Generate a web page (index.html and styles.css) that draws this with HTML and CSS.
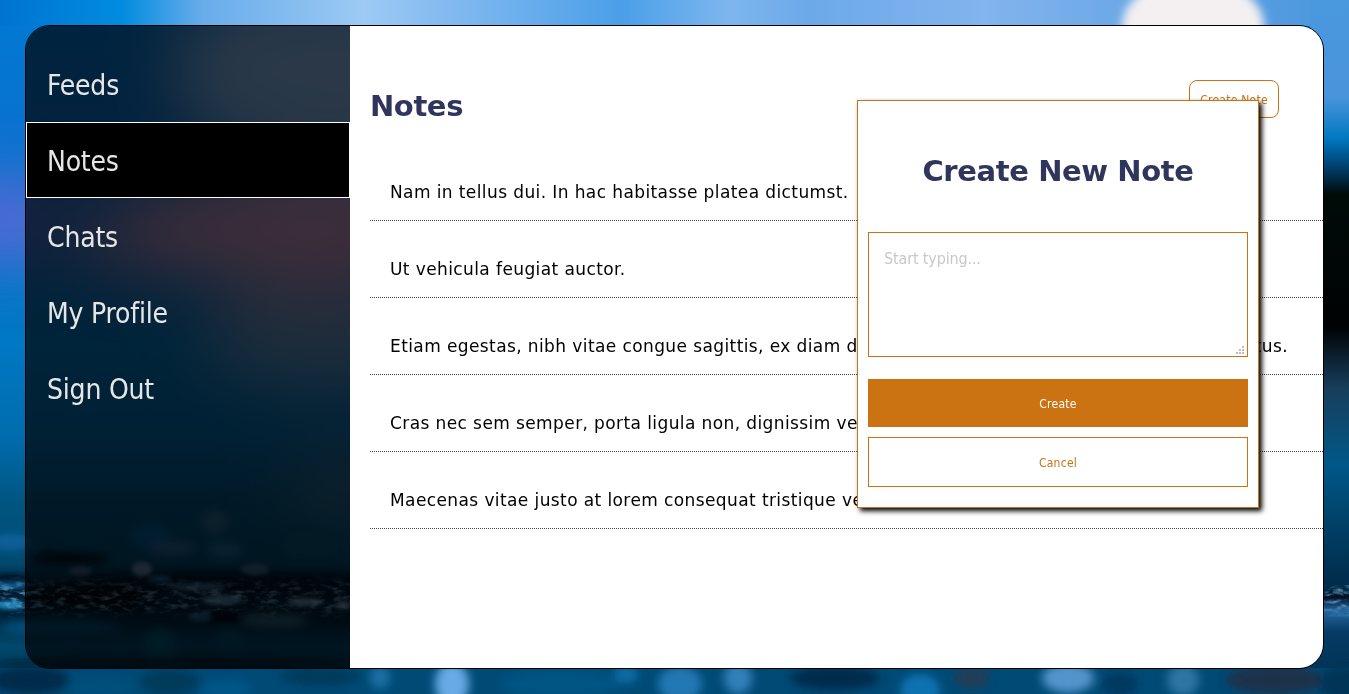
FILE: index.html
```html
<!DOCTYPE html>
<html lang="en">
<head>
<meta charset="utf-8">
<title>Notes</title>
<link rel="stylesheet" href="styles.css">
</head>
<body>
<svg class="backdrop" viewBox="0 0 1349 694" preserveAspectRatio="none" aria-hidden="true">
  <defs>
    <linearGradient id="sky" x1="0" y1="0" x2="0" y2="1">
      <stop offset="0" stop-color="#007ad4"/><stop offset=".18" stop-color="#0872d0"/>
      <stop offset=".5" stop-color="#0078c2"/><stop offset=".63" stop-color="#006cae"/>
      <stop offset=".72" stop-color="#005682"/><stop offset=".81" stop-color="#004a70"/>
      <stop offset=".85" stop-color="#001a30"/><stop offset=".89" stop-color="#00233c"/>
      <stop offset=".93" stop-color="#00486c"/><stop offset="1" stop-color="#003e66"/>
    </linearGradient>
    <linearGradient id="east" x1="0" y1="0" x2="0" y2="1">
      <stop offset="0" stop-color="#4a98dd"/><stop offset=".14" stop-color="#4a94dc"/>
      <stop offset=".2" stop-color="#0078c0"/><stop offset=".245" stop-color="#003a63"/>
      <stop offset=".28" stop-color="#000b08"/><stop offset=".47" stop-color="#000203"/>
      <stop offset=".56" stop-color="#183e5c"/><stop offset=".67" stop-color="#005888"/>
      <stop offset=".77" stop-color="#003d62"/><stop offset=".85" stop-color="#002a48"/>
      <stop offset=".86" stop-color="#001024"/><stop offset=".88" stop-color="#2468a0"/>
      <stop offset=".91" stop-color="#073b65"/><stop offset="1" stop-color="#00304f"/>
    </linearGradient>
    <linearGradient id="top" x1="0" y1="0" x2="1" y2="0">
      <stop offset="0" stop-color="#0074d0"/><stop offset=".09" stop-color="#008ce0"/>
      <stop offset=".15" stop-color="#68acea"/><stop offset=".27" stop-color="#9ccaf4"/>
      <stop offset=".33" stop-color="#84baf0"/><stop offset=".46" stop-color="#4a9fe8"/>
      <stop offset=".54" stop-color="#7db6ef"/><stop offset=".6" stop-color="#6ca9e9"/>
      <stop offset=".73" stop-color="#82b4ee"/><stop offset="1" stop-color="#4795dc"/>
    </linearGradient>
    <filter id="b30" x="-100%" y="-100%" width="300%" height="300%"><feGaussianBlur stdDeviation="34"/></filter>
    <filter id="b4" x="-50%" y="-50%" width="200%" height="200%"><feGaussianBlur stdDeviation="5"/></filter>
    <filter id="b2" x="-50%" y="-50%" width="200%" height="200%"><feGaussianBlur stdDeviation="2"/></filter>
    <filter id="speckle" x="0" y="0" width="100%" height="100%">
      <feTurbulence type="fractalNoise" baseFrequency=".09 .22" numOctaves="4" seed="4"/>
      <feColorMatrix values="0 0 0 0 .22  0 0 0 0 .5  0 0 0 0 .75  3.2 0 0 0 -1.5"/>
    </filter>
    <linearGradient id="band" x1="0" y1="0" x2="0" y2="1">
      <stop offset="0" stop-color="#000"/><stop offset=".35" stop-color="#fff"/>
      <stop offset=".75" stop-color="#fff"/><stop offset="1" stop-color="#000"/>
    </linearGradient>
    <mask id="fade"><rect y="575" width="1349" height="44" fill="url(#band)"/></mask>
  </defs>
  <rect width="1349" height="694" fill="url(#sky)"/>
  <g filter="url(#b30)">
    <ellipse cx="340" cy="70" rx="170" ry="95" fill="#8cbcf0"/>
    <ellipse cx="0" cy="220" rx="50" ry="38" fill="#7564d8"/>
    <ellipse cx="170" cy="235" rx="110" ry="38" fill="#8f80c0"/>
    <ellipse cx="300" cy="228" rx="180" ry="52" fill="#d898c0"/>
    <ellipse cx="330" cy="335" rx="130" ry="50" fill="#6c98c4"/>
    <ellipse cx="345" cy="485" rx="60" ry="30" fill="#407494"/>
  </g>
  <rect width="1349" height="26" fill="url(#top)"/>
  <rect x="1310" width="39" height="694" fill="url(#east)"/>
  <ellipse cx="1193" cy="27" rx="71" ry="50" fill="#f4f0f2" filter="url(#b4)"/>
  <g filter="url(#b4)">
    <ellipse cx="10" cy="542" rx="24" ry="8" fill="#0a609a"/>
    <ellipse cx="80" cy="540" rx="22" ry="9" fill="#004e7c"/>
    <ellipse cx="150" cy="536" rx="20" ry="12" fill="#006098"/>
    <ellipse cx="172" cy="548" rx="24" ry="7" fill="#2c6898"/>
    <ellipse cx="215" cy="522" rx="14" ry="12" fill="#2c6890"/>
    <ellipse cx="225" cy="550" rx="18" ry="8" fill="#28689a"/>
    <ellipse cx="310" cy="545" rx="30" ry="14" fill="#105478"/>
    <ellipse cx="70" cy="558" rx="40" ry="6" fill="#000812"/>
    <ellipse cx="220" cy="580" rx="150" ry="6" fill="#00101e"/>
    <ellipse cx="90" cy="597" rx="60" ry="12" fill="#000a14"/>
    <ellipse cx="240" cy="618" rx="40" ry="5" fill="#000610"/>
    <ellipse cx="60" cy="628" rx="60" ry="9" fill="#00507a"/>
    <ellipse cx="275" cy="621" rx="34" ry="6" fill="#346884"/>
    <ellipse cx="160" cy="644" rx="16" ry="15" fill="#005a78"/>
    <ellipse cx="230" cy="640" rx="14" ry="12" fill="#004e70"/>
    <ellipse cx="175" cy="664" rx="190" ry="8" fill="#00263a"/>
  </g>
  <g filter="url(#b2)">
    <ellipse cx="142" cy="569" rx="10" ry="7" fill="#6482a8"/>
    <ellipse cx="80" cy="571" rx="11" ry="5" fill="#3c5c80"/>
    <ellipse cx="160" cy="579" rx="12" ry="4" fill="#1e5482"/>
    <ellipse cx="255" cy="569" rx="14" ry="6" fill="#3e6490"/>
    <ellipse cx="198" cy="587" rx="28" ry="4" fill="#34608a"/>
    <ellipse cx="222" cy="600" rx="20" ry="5" fill="#5480a0"/>
    <ellipse cx="305" cy="602" rx="18" ry="4" fill="#6088a8"/>
    <ellipse cx="343" cy="605" rx="8" ry="4" fill="#6a8ca8"/>
    <ellipse cx="200" cy="617" rx="12" ry="5" fill="#205880"/>
    <ellipse cx="10" cy="605" rx="15" ry="4" fill="#1d88c2"/>
    <ellipse cx="10" cy="577" rx="20" ry="3" fill="#001326"/>
    <ellipse cx="10" cy="586" rx="18" ry="2" fill="#1874b8"/>
  </g>
  <g mask="url(#fade)">
    <rect y="575" width="350" height="44" filter="url(#speckle)" opacity=".6"/>
    <rect x="1310" y="585" width="39" height="34" filter="url(#speckle)" opacity=".6"/>
  </g>
  <rect y="668" width="1349" height="26" fill="#004a76"/>
  <g filter="url(#b4)">
    <ellipse cx="30" cy="680" rx="40" ry="14" fill="#002a48"/>
    <ellipse cx="100" cy="688" rx="34" ry="10" fill="#00507c"/>
    <ellipse cx="170" cy="682" rx="30" ry="14" fill="#003a5c"/>
    <ellipse cx="225" cy="690" rx="26" ry="10" fill="#005688"/>
    <ellipse cx="320" cy="676" rx="40" ry="10" fill="#003a5c"/>
    <ellipse cx="380" cy="677" rx="10" ry="12" fill="#1c70a4"/>
    <ellipse cx="452" cy="684" rx="17" ry="22" fill="#68aae4"/>
    <ellipse cx="560" cy="684" rx="60" ry="14" fill="#005582"/>
    <ellipse cx="626" cy="674" rx="12" ry="10" fill="#106aa4"/>
    <ellipse cx="680" cy="684" rx="22" ry="18" fill="#2478b4"/>
    <ellipse cx="738" cy="678" rx="14" ry="16" fill="#3080ba"/>
    <ellipse cx="835" cy="678" rx="45" ry="12" fill="#002c4c"/>
    <ellipse cx="920" cy="690" rx="20" ry="16" fill="#0872b0"/>
    <ellipse cx="972" cy="678" rx="18" ry="10" fill="#203c54"/>
    <ellipse cx="1068" cy="678" rx="26" ry="15" fill="#5294cc"/>
    <ellipse cx="1120" cy="684" rx="18" ry="12" fill="#00395f"/>
    <ellipse cx="1183" cy="680" rx="16" ry="16" fill="#2e74a4"/>
    <ellipse cx="1275" cy="680" rx="50" ry="14" fill="#1a304a"/>
    <ellipse cx="1345" cy="684" rx="26" ry="20" fill="#003458"/>
  </g>
</svg>

<div class="panel">
  <nav class="sidebar">
    <a class="nav-item">Feeds</a>
    <a class="nav-item active">Notes</a>
    <a class="nav-item">Chats</a>
    <a class="nav-item">My Profile</a>
    <a class="nav-item">Sign Out</a>
  </nav>
  <main class="content">
    <header class="content-header">
      <h1 class="title">Notes</h1>
      <button class="create-note">Create Note</button>
    </header>
    <ul class="notes">
      <li class="note">Nam in tellus dui. In hac habitasse platea dictumst.</li>
      <li class="note">Ut vehicula feugiat auctor.</li>
      <li class="note"><span>Etiam egestas, nibh vitae congue sagittis, ex diam di</span><span>tus.</span></li>
      <li class="note">Cras nec sem semper, porta ligula non, dignissim vel</li>
      <li class="note">Maecenas vitae justo at lorem consequat tristique vel</li>
    </ul>
  </main>
</div>

<section class="modal">
  <h2 class="modal-title">Create New Note</h2>
  <div class="field">
    <textarea class="note-input" placeholder="Start typing..."></textarea>
    <svg class="grip" viewBox="0 0 8 8" aria-hidden="true"><path fill="#bdbdbd" d="M6 0h2v2H6zM3 3h2v2H3zM6 3h2v2H6zM0 6h2v2H0zM3 6h2v2H3zM6 6h2v2H6z"/></svg>
  </div>
  <button class="btn primary">Create</button>
  <button class="btn secondary">Cancel</button>
</section>
</body>
</html>
```

FILE: styles.css
```css
* { box-sizing: border-box; }

body {
  margin: 0;
  height: 694px;
  padding: 25px;
  overflow: hidden;
  font-family: "DejaVu Sans Condensed", "DejaVu Sans", sans-serif;
  font-stretch: condensed;
  color: #000;
}

.backdrop {
  position: absolute;
  top: 0;
  left: 0;
  z-index: -1;
  width: 1349px;
  height: 694px;
}

.panel {
  display: flex;
  height: 644px;
  border: 1px solid #000;
  border-radius: 25px;
  overflow: hidden;
}

.sidebar {
  flex: 0 0 324px;
  padding-top: 20px;
  background: rgba(0, 0, 0, .7);
}

.nav-item {
  display: flex;
  align-items: center;
  height: 76px;
  padding: 2px 20px 0;
  border: 1px solid transparent;
  color: #e6e6e6;
  font-size: 28px;
  letter-spacing: -.2px;
}

.nav-item.active {
  background: #000;
  border-color: #fff;
}

.content {
  flex: 1;
  padding-left: 20px;
  background: #fff;
}

.content-header {
  display: flex;
  justify-content: space-between;
  align-items: flex-start;
  height: 118px;
  padding: 54px 44px 0 0;
}

.title,
.modal-title {
  margin: 0;
  color: #30355b;
  font-family: "DejaVu Sans", sans-serif;
  font-stretch: normal;
  font-size: 29px;
  line-height: 36px;
  font-weight: 700;
  letter-spacing: -.4px;
}

.title { margin-top: 8px; }

button {
  font-family: inherit;
  font-stretch: inherit;
  letter-spacing: .25px;
}

.create-note {
  width: 90px;
  height: 38px;
  padding: 2px 0 0;
  border: 1px solid #cb7212;
  border-radius: 8px;
  background: #fff;
  color: #cb7212;
  font-size: 12px;
}

.notes {
  margin: 0;
  padding: 0;
  list-style: none;
}

.note {
  display: flex;
  justify-content: space-between;
  align-items: flex-end;
  height: 77px;
  padding: 0 35px 18px 20px;
  border-bottom: 1px dotted #444;
  font-family: "DejaVu Sans", sans-serif;
  font-stretch: normal;
  font-size: 17px;
  line-height: 20px;
  letter-spacing: .4px;
  white-space: nowrap;
}

.modal {
  position: absolute;
  top: 100px;
  left: 857px;
  display: flex;
  flex-direction: column;
  width: 402px;
  height: 408px;
  padding: 52px 10px 20px;
  border: 1px solid #cb7212;
  background: #fff;
  box-shadow: 3px 3px 5px #000;
}

.modal-title {
  margin-bottom: 43px;
  text-align: center;
}

.field {
  position: relative;
  height: 125px;
  margin-bottom: 22px;
}

.note-input {
  display: block;
  width: 100%;
  height: 100%;
  padding: 16px 15px;
  border: 1px solid #cb7212;
  resize: none;
  font-family: inherit;
  font-stretch: inherit;
  font-size: 16px;
  line-height: 19px;
  letter-spacing: -.15px;
}

.note-input::placeholder { color: #c8c8c8; }

.grip {
  position: absolute;
  right: 4px;
  bottom: 3px;
  width: 8px;
  height: 8px;
}

.btn {
  padding: 2px 0 0;
  border: 1px solid #cb7212;
  font-size: 12px;
}

.primary {
  height: 48px;
  margin-bottom: 10px;
  background: #cb7212;
  color: #fff;
}

.secondary {
  height: 50px;
  background: #fff;
  color: #cb7212;
}
```
